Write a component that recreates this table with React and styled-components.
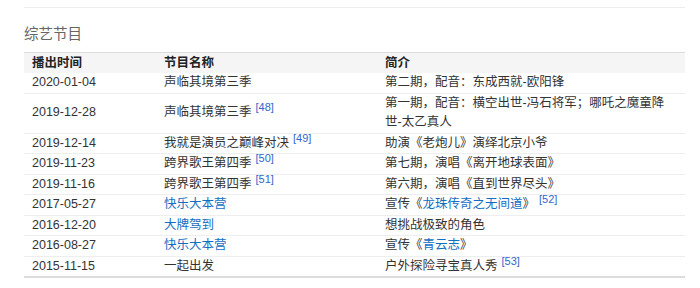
import React from 'react';
import styled, { createGlobalStyle } from 'styled-components';

const GlobalStyle = createGlobalStyle`
    body {
        margin: 0;
        background: #fff;
        font-family: "Liberation Sans", "Noto Sans CJK SC", sans-serif;
        color: #333;
    }
`;

const Section = styled.section`
    width: 661px;
    padding-left: 24px;
    padding-top: 7px;
`;

const TopRule = styled.div`
    border-top: 1px solid #eeeeee;
`;

const Title = styled.h3`
    margin: 16px 0 8px;
    font-size: 14.5px;
    font-weight: normal;
    line-height: 20px;
    color: #666;
`;

const Table = styled.table`
    width: 661px;
    border-collapse: collapse;
    table-layout: fixed;
    font-size: 12.5px;
    border-top: 1px solid #dddddd;
    border-bottom: 2px solid #dddddd;
`;

const HeadRow = styled.tr`
    background: #f5f5f5;
`;

const Th = styled.th`
    box-sizing: border-box;
    width: ${(p) => p.$w};
    padding: 0 ${(p) => p.$pr || '0'} 0 ${(p) => p.$pl || '0'};
    height: 20px;
    line-height: 20px;
    text-align: left;
    font-weight: bold;
    color: #222;
`;

const Td = styled.td`
    padding: 0 ${(p) => p.$pr || '0'} 0 ${(p) => p.$pl || '0'};
    line-height: 19.5px;
    vertical-align: middle;
    border-bottom: 1px solid #eeeeee;
`;

const Link = styled.a`
    color: #136ec2;
    text-decoration: none;
`;

const Ref = styled.sup`
    margin-left: 4px;
    font-size: 11px;
    line-height: 0;
    vertical-align: 5px;
    color: #3366cc;
`;

const rows = [
    { date: '2020-01-04', name: '声临其境第三季', desc: '第二期，配音：东成西就-欧阳锋' },
    { date: '2019-12-28', name: '声临其境第三季', nameRef: 48, desc: '第一期，配音：横空出世-冯石将军；哪吒之魔童降世-太乙真人' },
    { date: '2019-12-14', name: '我就是演员之巅峰对决', nameRef: 49, desc: '助演《老炮儿》演绎北京小爷' },
    { date: '2019-11-23', name: '跨界歌王第四季', nameRef: 50, desc: '第七期，演唱《离开地球表面》' },
    { date: '2019-11-16', name: '跨界歌王第四季', nameRef: 51, desc: '第六期，演唱《直到世界尽头》' },
    {
        date: '2017-05-27',
        name: '快乐大本营',
        nameLink: true,
        desc: (
            <>
                宣传《<Link href="#">龙珠传奇之无间道</Link>》<Ref>[52]</Ref>
            </>
        ),
    },
    { date: '2016-12-20', name: '大牌驾到', nameLink: true, desc: '想挑战极致的角色' },
    {
        date: '2016-08-27',
        name: '快乐大本营',
        nameLink: true,
        desc: (
            <>
                宣传《<Link href="#">青云志</Link>》
            </>
        ),
    },
    {
        date: '2015-11-15',
        name: '一起出发',
        desc: (
            <>
                户外探险寻宝真人秀<Ref>[53]</Ref>
            </>
        ),
    },
];

const App = () => {
    return (
        <>
            <GlobalStyle />
            <Section>
                <TopRule />
                <Title>综艺节目</Title>
                <Table>
                    <thead>
                        <HeadRow>
                            <Th $w="140px" $pl="8px">播出时间</Th>
                            <Th $w="221px">节目名称</Th>
                            <Th $w="300px" $pr="12px">简介</Th>
                        </HeadRow>
                    </thead>
                    <tbody>
                        {rows.map((r) => (
                            <tr key={r.date}>
                                <Td $pl="8px">{r.date}</Td>
                                <Td>
                                    {r.nameLink ? <Link href="#">{r.name}</Link> : r.name}
                                    {r.nameRef && <Ref>[{r.nameRef}]</Ref>}
                                </Td>
                                <Td $pr="12px">{r.desc}</Td>
                            </tr>
                        ))}
                    </tbody>
                </Table>
            </Section>
        </>
    );
};

export default App;
